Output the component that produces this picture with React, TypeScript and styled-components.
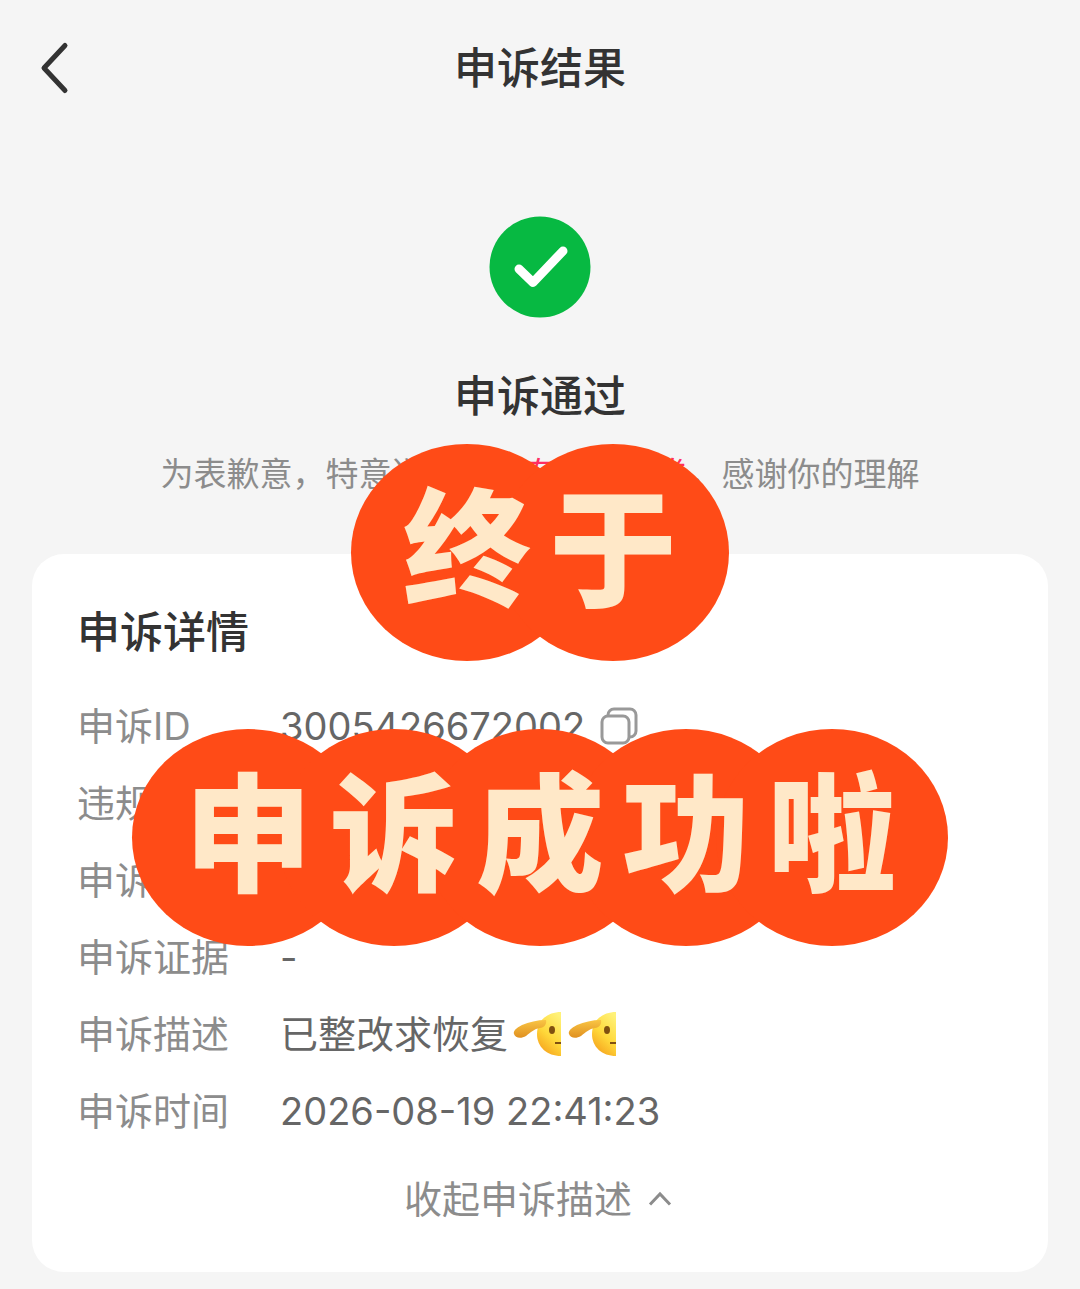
import React from "react";
import styled, { createGlobalStyle } from "styled-components";

const GlobalStyle = createGlobalStyle`
  *, *::before, *::after { box-sizing: border-box; }
  body {
    margin: 0;
    background: #f5f5f5;
    font-family: Inter, "Noto Sans CJK SC", sans-serif;
    color: #333;
  }
  button {
    font: inherit;
    color: inherit;
    border: 0;
    padding: 0;
    background: none;
    cursor: pointer;
  }
  svg { display: block; }
`;

const Page = styled.div`
  position: relative;
  overflow: hidden;
  padding-bottom: 17px;
`;

const Header = styled.header`
  display: grid;
  grid-template-columns: 80px 1fr 80px;
  align-items: center;
  height: 136px;
`;

const BackButton = styled.button`
  justify-self: start;
  padding-left: 38px;
`;

const Title = styled.h1`
  margin: 0;
  font-size: 43px;
  font-weight: 500;
  line-height: 60px;
  text-align: center;
`;

const Result = styled.section`
  display: flex;
  flex-direction: column;
  align-items: center;
  padding: 80px 32px 56px;
`;

const ResultTitle = styled.h2`
  margin: 48px 0 24px;
  font-size: 43px;
  font-weight: 500;
  line-height: 60px;
`;

const ResultNote = styled.p`
  margin: 0;
  font-size: 33px;
  line-height: 48px;
  color: #8c8c8c;
  white-space: nowrap;
`;

const Reward = styled.span`
  color: #ff2e63;
`;

const Card = styled.section`
  margin: 0 32px;
  padding: 48px 45px 45px;
  border-radius: 32px;
  background: #fff;
`;

const CardTitle = styled.h2`
  margin: 0 0 36px;
  font-size: 43px;
  font-weight: 500;
  line-height: 60px;
`;

const Details = styled.dl`
  display: grid;
  row-gap: 21px;
  margin: 0;
  font-size: 38px;
  line-height: 56px;
`;

const Row = styled.div`
  display: grid;
  grid-template-columns: 203px 1fr;
`;

const Label = styled.dt`
  color: #8c8c8c;
`;

const Value = styled.dd`
  display: flex;
  align-items: center;
  margin: 0;
  color: #666;
`;

const CopyButton = styled.button`
  margin-left: 15px;
`;

const Toggle = styled.button`
  display: flex;
  align-items: center;
  gap: 16px;
  margin: 32px auto 0;
  font-size: 38px;
  line-height: 56px;
  color: #8c8c8c;
`;

const Sticker = styled.div<{ $top: number }>`
  position: absolute;
  top: ${(p) => p.$top}px;
  left: 50%;
  display: flex;
  transform: translateX(-50%);
  isolation: isolate;
`;

const Bubble = styled.span`
  position: relative;
  display: grid;
  place-items: center;
  width: 232px;
  height: 217px;
  padding-bottom: 4px;
  font-size: 128px;
  font-weight: 900;
  line-height: 160px;
  color: #ffe8c8;

  & + & { margin-left: -86px; }

  &::before {
    content: "";
    position: absolute;
    inset: 0;
    z-index: -1;
    border-radius: 50%;
    background: #ff4b17;
  }
`;

const BackIcon = () => (
  <svg width="32" height="56" viewBox="0 0 32 56" fill="none" stroke="#333" strokeWidth="5" strokeLinecap="round" strokeLinejoin="round">
    <path d="M27 5.500 6 28 27 50.500" />
  </svg>
);

const SuccessIcon = () => (
  <svg width="102" height="102" viewBox="0 0 102 102" fill="none">
    <circle cx="51" cy="51" r="50.500" fill="#07b942" />
    <path d="M30 53 44 66.500 74 35" stroke="#fff" strokeWidth="9" strokeLinecap="round" strokeLinejoin="round" />
  </svg>
);

const CopyIcon = () => (
  <svg width="38" height="38" viewBox="0 0 38 38" fill="none" stroke="#999" strokeWidth="3">
    <rect x="2" y="9" width="27" height="27" rx="6" />
    <path d="M8 9V8a6 6 0 0 1 6-6h16a6 6 0 0 1 6 6v16a6 6 0 0 1-6 6h-1" />
  </svg>
);

const ChevronUp = () => (
  <svg width="28" height="16" viewBox="0 0 28 16" fill="none" stroke="#8c8c8c" strokeWidth="3">
    <path d="M2 13.500 12 3 22 13.500" />
  </svg>
);

const SaluteFace = () => (
  <svg width="55" height="46" viewBox="0 0 55 46">
    <defs>
      <linearGradient id="face" x1="0.8" y1="0" x2="0.3" y2="1">
        <stop offset="0" stopColor="#fff27a" />
        <stop offset="0.55" stopColor="#ffd83a" />
        <stop offset="1" stopColor="#f5a01c" />
      </linearGradient>
      <linearGradient id="arm" x1="0" y1="0" x2="0" y2="1">
        <stop offset="0" stopColor="#f9c544" />
        <stop offset="1" stopColor="#e09020" />
      </linearGradient>
    </defs>
    <path d="M53 1C39 1 29 10 29 23s10 22 24 22Z" fill="url(#face)" />
    <path d="M38 9C29 9 21 11 14 14 8 17 5 20 6 23c1 4 7 5 12 2 5-4 8-7 14-8 4 0 7-4 6-8Z" fill="url(#arm)" />
    <ellipse cx="44" cy="19" rx="3" ry="4" fill="#805010" />
    <path d="M47 32h6" stroke="#805010" strokeWidth="2" />
  </svg>
);

const StickerText = ({ text, top }: { text: string; top: number }) => (
  <Sticker $top={top}>
    {[...text].map((char) => (
      <Bubble key={char}>{char}</Bubble>
    ))}
  </Sticker>
);

export default function App() {
  return (
    <>
      <GlobalStyle />
      <Page>
        <Header>
          <BackButton aria-label="返回">
            <BackIcon />
          </BackButton>
          <Title>申诉结果</Title>
        </Header>
        <Result>
          <SuccessIcon />
          <ResultTitle>申诉通过</ResultTitle>
          <ResultNote>
            为表歉意，特意送上一份<Reward>专属流量券</Reward>，感谢你的理解
          </ResultNote>
        </Result>
        <Card>
          <CardTitle>申诉详情</CardTitle>
          <Details>
            <Row>
              <Label>申诉ID</Label>
              <Value>
                3005426672002
                <CopyButton aria-label="复制">
                  <CopyIcon />
                </CopyButton>
              </Value>
            </Row>
            <Row>
              <Label>违规</Label>
            </Row>
            <Row>
              <Label>申诉</Label>
            </Row>
            <Row>
              <Label>申诉证据</Label>
              <Value>-</Value>
            </Row>
            <Row>
              <Label>申诉描述</Label>
              <Value>
                已整改求恢复
                <SaluteFace />
                <SaluteFace />
              </Value>
            </Row>
            <Row>
              <Label>申诉时间</Label>
              <Value>2026-08-19 22:41:23</Value>
            </Row>
          </Details>
          <Toggle>
            收起申诉描述
            <ChevronUp />
          </Toggle>
        </Card>
        <StickerText text="终于" top={444} />
        <StickerText text="申诉成功啦" top={729} />
      </Page>
    </>
  );
}
